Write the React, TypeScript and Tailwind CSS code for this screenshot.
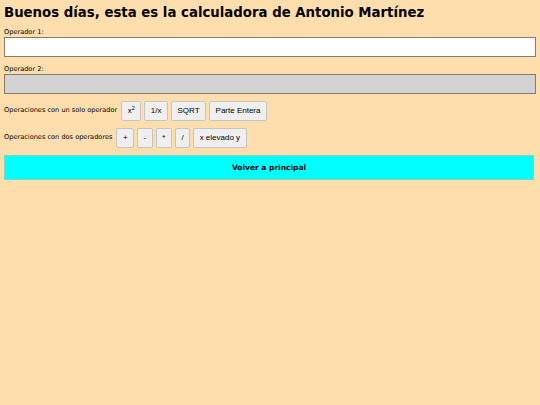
import React from "react";

const btn =
  "h-[20px] px-[5.5px] bg-[#efefef] border border-[#c4c4c4] rounded-[2px] text-[8px] text-black leading-none [font-family:'Liberation_Sans',Arial,sans-serif]";

export default function App() {
  return (
    <div className="min-h-[405px] w-full bg-[#ffdead] px-[4px] pt-[3px] [font-family:'DejaVu_Sans',Verdana,sans-serif] text-black">
      <h1 className="text-[13.3px] font-bold leading-[20px]">
        Buenos días, esta es la calculadora de Antonio Martínez
      </h1>
      <div className="mt-[5px] text-[6.6px] leading-[9px]">Operador 1:</div>
      <input
        type="text"
        className="block w-[532px] h-[20px] bg-white border-[1.5px] border-[#857c6e] outline-none"
      />
      <div className="mt-[8px] text-[6.6px] leading-[9px]">Operador 2:</div>
      <input
        type="text"
        disabled
        className="block w-[532px] h-[20px] bg-[#d3d3d3] border-[1.5px] border-[#857c6e] outline-none"
      />
      <div className="mt-[7px] flex items-center gap-[3px] h-[20px]">
        <span className="text-[6.6px] mr-[1px]">Operaciones con un solo operador</span>
        <button className={btn}>
          x<sup className="text-[5.5px]">2</sup>
        </button>
        <button className={btn}>1/x</button>
        <button className={btn}>SQRT</button>
        <button className={btn}>Parte Entera</button>
      </div>
      <div className="mt-[7px] flex items-center gap-[3px] h-[20px]">
        <span className="text-[6.6px] mr-[1px]">Operaciones con dos operadores</span>
        <button className={btn}>+</button>
        <button className={btn}>-</button>
        <button className={btn}>*</button>
        <button className={btn}>/</button>
        <button className={btn}>x elevado y</button>
      </div>
      <button className="mt-[7px] block w-[530px] h-[25px] bg-[#00ffff] border border-[#7fd6c8] text-[7.5px] font-bold [font-family:'DejaVu_Sans',Verdana,sans-serif]">
        Volver a principal
      </button>
    </div>
  );
}
